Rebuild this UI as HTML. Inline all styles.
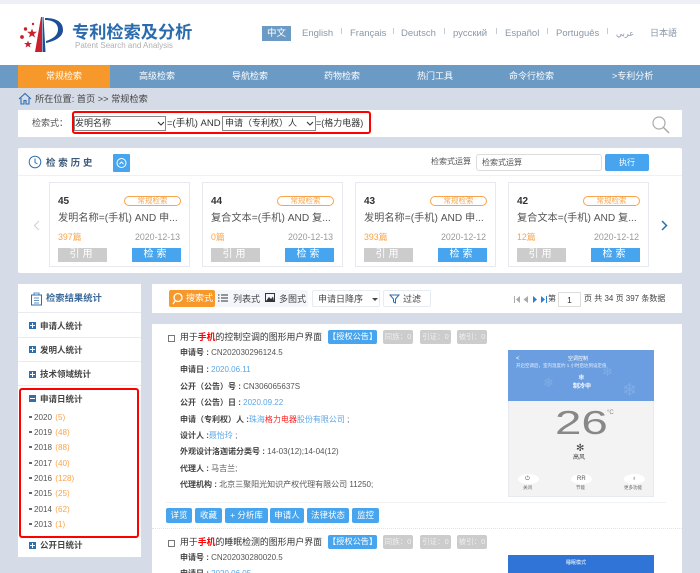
<!DOCTYPE html>
<html><head><meta charset="utf-8">
<style>
*{box-sizing:border-box;margin:0;padding:0}
html{width:700px;height:573px;overflow:hidden;background:#d5dbe7}
body{width:700px;height:573px;overflow:hidden;font-family:"Liberation Sans","Noto Sans CJK SC",sans-serif;position:relative;color:#444;background:#d5dbe7;filter:blur(.3px)}
.a{position:absolute;white-space:nowrap;line-height:1}
.w{position:absolute;background:#fff}
.card{position:absolute;top:182px;width:141px;height:85px;background:#fff;border:1px solid #e6e9ef}
.n{left:8px;top:14px;font-size:10px;font-weight:bold;color:#333}
.tag{left:74px;top:13px;width:57px;height:10px;border:1px solid #f9a44a;border-radius:5px;color:#f9a44a;font-size:7.5px;line-height:8px;text-align:center}
.t{left:8px;top:31px;font-size:10.2px;color:#555}
.c{left:8px;top:50px;font-size:8.8px;color:#f9a44a}
.d{right:9px;top:50px;font-size:8.8px;color:#999}
.b1{left:8px;top:65px;width:49px;height:14px;background:#ccc;color:#fff;font-size:10px;line-height:14px;text-align:center;letter-spacing:3px}
.b2{left:82px;top:65px;width:49px;height:14px;background:#46a5ee;color:#fff;font-size:10px;line-height:14px;text-align:center;letter-spacing:3px}
.nav{top:72px;font-size:9px;color:#fff}
.lang{top:29px;font-size:9.5px;color:#8a97a8}
.tick{position:absolute;top:28px;width:1px;height:6px;background:#c5cbd3}
.side{left:40px;font-size:8.5px;font-weight:bold;color:#444}
.plus{position:absolute;left:29px;width:7px;height:7px;background:#2f6fae}
.plus:before{content:"";position:absolute;left:1px;top:3px;width:5px;height:1px;background:#fff}
.plus.p:after{content:"";position:absolute;left:3px;top:1px;width:1px;height:5px;background:#fff}
.line{position:absolute;left:18px;width:123px;height:1px;background:#e8ebf0}
.yr{left:29px;font-size:8.1px;color:#555}
.yr s{display:inline-block;width:3px;height:2px;background:#666;margin-right:2px;vertical-align:2px;text-decoration:none}
.yr b{font-weight:normal;color:#f9a44a;margin-left:1px}
.f{left:180px;font-size:8px;color:#555}
.f b{color:#444}
.f i{font-style:normal;color:#5aa6e6}
.f u{text-decoration:none;color:#f22}
.ttl{left:180px;font-size:8.9px;color:#333}
.ttl u{text-decoration:none;color:#f00;font-weight:bold}
.st{height:14px;background:#ccc;border-radius:2px;color:#eee;font-size:7.5px;line-height:14px;text-align:center}
.gr{height:14px;background:#46a5ee;border-radius:2px;color:#fff;font-size:8.2px;line-height:14px;text-align:center}
.ab{position:absolute;top:508px;height:15px;background:#46a5ee;border-radius:2px;color:#fff;font-size:8.5px;line-height:15px;text-align:center}
.cb{position:absolute;left:168px;width:7px;height:7px;border:1px solid #777;background:#fff}
.tb{top:295px;font-size:9px;color:#444}
.ci{position:absolute;top:474px;width:21px;height:10px;border-radius:50%;background:#fff}
.sm{font-size:4.5px;color:#666}
</style></head>
<body>
<div class="a" style="left:0;top:0;width:700px;height:4px;background:#eef0f5"></div>
<div class="w" style="left:0;top:4px;width:700px;height:61px"></div>

<svg class="a" style="left:18px;top:15px" width="46" height="40" viewBox="0 0 46 40">
<path d="M17 37 L23 2 L24 2 L24 37Z" fill="#c8202e"/>
<path d="M24.500 2 L25.500 2 L27.500 37 L24.500 37Z" fill="#1e4f96"/>
<path d="M27 3 C40 3 45 8 45 15 C45 22 37 26 28 28 L28 26 C34 24 40 21 40 14 C40 8 34 5 27 5Z" fill="#1e4f96"/>
<polygon points="14,13.500 15.200,16.700 19,16.800 16,19 17,22.500 14,20.500 11,22.500 12,19 9,16.800 12.800,16.700" fill="#c8202e"/>
<polygon points="10,25.500 11,28 14,28 11.600,29.800 12.500,32.500 10,31 7.500,32.500 8.400,29.800 6,28 9,28" fill="#c8202e"/>
<circle cx="4" cy="22" r="1.900" fill="#c8202e"/><circle cx="7.500" cy="14" r="1.700" fill="#c8202e"/><circle cx="15" cy="9" r="1.200" fill="#c8202e"/>
</svg>
<div class="a" style="left:72px;top:24px;font-size:17.200px;font-weight:bold;color:#2a6bae">专利检索及分析</div>
<div class="a" style="left:75px;top:42px;font-size:8px;color:#b0b0b0">Patent Search and Analysis</div>

<div class="a" style="left:262px;top:26px;width:29px;height:15px;background:#6b9ac4;color:#fff;font-size:9.500px;line-height:15px;text-align:center">中文</div>
<div class="a lang" style="left:302px">English</div>
<div class="a lang" style="left:350px">Français</div>
<div class="a lang" style="left:401px">Deutsch</div>
<div class="a lang" style="left:453px">русский</div>
<div class="a lang" style="left:505px">Español</div>
<div class="a lang" style="left:556px">Português</div>
<div class="a lang" style="left:616px;font-size:8px;top:30px">عربي</div>
<div class="a lang" style="left:650px;font-size:9px">日本語</div>
<div class="tick" style="left:341px"></div><div class="tick" style="left:393px"></div><div class="tick" style="left:444px"></div><div class="tick" style="left:496px"></div><div class="tick" style="left:547px"></div><div class="tick" style="left:607px"></div>

<div class="a" style="left:0;top:65px;width:700px;height:23px;background:#6b9ac4"></div>
<div class="a" style="left:18px;top:65px;width:92px;height:23px;background:#f7982a"></div>
<div class="a nav" style="left:46px">常规检索</div>
<div class="a nav" style="left:139px">高级检索</div>
<div class="a nav" style="left:232px">导航检索</div>
<div class="a nav" style="left:324px">药物检索</div>
<div class="a nav" style="left:417px">热门工具</div>
<div class="a nav" style="left:509px">命令行检索</div>
<div class="a nav" style="left:612px">&gt;专利分析</div>

<svg class="a" style="left:18px;top:92px" width="14" height="13" viewBox="0 0 14 13"><path d="M1 7 L7 1.500 L13 7 M3 6 V12 H6 V8.500 H8 V12 H11 V6" fill="none" stroke="#2f6fae" stroke-width="1.100"/></svg>
<div class="a" style="left:35px;top:95px;font-size:9.200px;color:#444">所在位置: 首页 &gt;&gt; 常规检索</div>

<div class="w" style="left:18px;top:110px;width:664px;height:27px"></div>
<div class="a" style="left:32px;top:119px;font-size:9px;color:#555">检索式：</div>
<div class="a" style="left:72px;top:111px;width:299px;height:23px;border:2px solid #f00;border-radius:3px"></div>
<div class="a" style="left:74px;top:116px;width:92px;height:15px;background:#fff;border:1px solid #888;font-size:9px;line-height:13px;color:#333">发明名称</div>
<svg class="a" style="left:157px;top:121px" width="8" height="5"><path d="M1 1 L4 4 L7 1" fill="none" stroke="#333" stroke-width="1.100"/></svg>
<div class="a" style="left:167px;top:119px;font-size:9.500px;color:#333">=(手机) AND</div>
<div class="a" style="left:222px;top:116px;width:94px;height:15px;background:#fff;border:1px solid #888;font-size:9px;line-height:13px;padding-left:2px;color:#333">申请（专利权）人</div>
<svg class="a" style="left:306px;top:121px" width="8" height="5"><path d="M1 1 L4 4 L7 1" fill="none" stroke="#333" stroke-width="1.100"/></svg>
<div class="a" style="left:316px;top:119px;font-size:9px;color:#333">=(格力电器)</div>
<svg class="a" style="left:651px;top:116px" width="20" height="19"><circle cx="8" cy="7" r="6" fill="none" stroke="#aaa" stroke-width="1.200"/><path d="M12.500 11.500 L18 17" stroke="#aaa" stroke-width="1.500"/></svg>

<div class="w" style="left:18px;top:148px;width:664px;height:125px;border-radius:2px"></div>
<div class="a" style="left:18px;top:175px;width:664px;height:1px;background:#eef0f4"></div>
<svg class="a" style="left:28px;top:155px" width="14" height="14"><circle cx="7" cy="7" r="5.800" fill="none" stroke="#2f6fae" stroke-width="1"/><path d="M7 3.500 V7.500 L9.500 9" fill="none" stroke="#2f6fae"/></svg>
<div class="a" style="left:46px;top:159px;font-size:9.500px;font-weight:bold;color:#3c5a7a;letter-spacing:2.800px">检索历史</div>
<div class="a" style="left:113px;top:154px;width:17px;height:18px;background:#46a5ee;border-radius:1px"></div>
<svg class="a" style="left:115px;top:157px" width="13" height="12"><circle cx="6.500" cy="6" r="4.500" fill="none" stroke="#fff"/><path d="M4.500 7 L6.500 5 L8.500 7" fill="none" stroke="#fff"/></svg>
<div class="a" style="left:431px;top:158px;font-size:8px;color:#555">检索式运算</div>
<div class="a" style="left:476px;top:154px;width:126px;height:17px;border:1px solid #ddd;border-radius:3px;background:#fff;font-size:8px;line-height:15px;padding-left:5px;color:#555">检索式运算</div>
<div class="a" style="left:605px;top:154px;width:44px;height:17px;background:#46a5ee;border-radius:2px;color:#fff;font-size:8px;line-height:17px;text-align:center">执行</div>
<svg class="a" style="left:33px;top:220px" width="7" height="11"><path d="M6 1 L1.500 5.500 L6 10" fill="none" stroke="#ccd4e0" stroke-width="1.200"/></svg>
<svg class="a" style="left:661px;top:220px" width="7" height="11"><path d="M1 1 L5.500 5.500 L1 10" fill="none" stroke="#2f6fae" stroke-width="1.500"/></svg>

<div class="card" style="left:49px"><div class="a n">45</div><div class="a tag">常规检索</div><div class="a t">发明名称=(手机) AND 申...</div><div class="a c">397篇</div><div class="a d">2020-12-13</div><div class="a b1">引用</div><div class="a b2">检索</div></div>
<div class="card" style="left:202px"><div class="a n">44</div><div class="a tag">常规检索</div><div class="a t">复合文本=(手机) AND 复...</div><div class="a c">0篇</div><div class="a d">2020-12-13</div><div class="a b1">引用</div><div class="a b2">检索</div></div>
<div class="card" style="left:355px"><div class="a n">43</div><div class="a tag">常规检索</div><div class="a t">发明名称=(手机) AND 申...</div><div class="a c">393篇</div><div class="a d">2020-12-12</div><div class="a b1">引用</div><div class="a b2">检索</div></div>
<div class="card" style="left:508px"><div class="a n">42</div><div class="a tag">常规检索</div><div class="a t">复合文本=(手机) AND 复...</div><div class="a c">12篇</div><div class="a d">2020-12-12</div><div class="a b1">引用</div><div class="a b2">检索</div></div>

<div class="w" style="left:18px;top:284px;width:123px;height:273px"></div>
<svg class="a" style="left:30px;top:292px" width="13" height="14"><rect x="1.500" y="3" width="10" height="10" fill="none" stroke="#2f6fae"/><path d="M4 3 V1 H9 V3 M4 6 H9 M4 8.500 H9 M4 11 H9" fill="none" stroke="#2f6fae" stroke-width=".8"/></svg>
<div class="a" style="left:46px;top:294px;font-size:9.300px;font-weight:bold;color:#3c6a9a">检索结果统计</div>
<div class="line" style="top:312px"></div><div class="line" style="top:337px"></div><div class="line" style="top:361px"></div><div class="line" style="top:385px"></div>
<div class="plus p" style="top:322px"></div><div class="a side" style="top:322px">申请人统计</div>
<div class="plus p" style="top:346px"></div><div class="a side" style="top:346px">发明人统计</div>
<div class="plus p" style="top:371px"></div><div class="a side" style="top:370px">技术领域统计</div>
<div class="plus" style="top:395px"></div><div class="a side" style="top:395px">申请日统计</div>
<div class="a yr" style="top:413.500px"><s></s>2020 <b>(5)</b></div>
<div class="a yr" style="top:429px"><s></s>2019 <b>(48)</b></div>
<div class="a yr" style="top:444px"><s></s>2018 <b>(88)</b></div>
<div class="a yr" style="top:459.500px"><s></s>2017 <b>(40)</b></div>
<div class="a yr" style="top:475px"><s></s>2016 <b>(128)</b></div>
<div class="a yr" style="top:490px"><s></s>2015 <b>(25)</b></div>
<div class="a yr" style="top:505.500px"><s></s>2014 <b>(62)</b></div>
<div class="a yr" style="top:521px"><s></s>2013 <b>(1)</b></div>
<div class="a" style="left:19px;top:388px;width:120px;height:150px;border:2px solid #f00;border-radius:3px"></div>
<div class="plus p" style="top:542px"></div><div class="a side" style="top:541px">公开日统计</div>

<div class="w" style="left:152px;top:284px;width:530px;height:29px"></div>
<div class="a" style="left:215px;top:290px;width:93px;height:17px;background:#f3f6fb;border-radius:2px"></div>
<div class="a" style="left:169px;top:290px;width:46px;height:17px;background:#f7982a;border-radius:2px;color:#fff;font-size:9px;line-height:17px;padding-left:17px">搜索式</div>
<svg class="a" style="left:171px;top:292px" width="13" height="13"><circle cx="7" cy="5.500" r="4" fill="none" stroke="#fff" stroke-width="1.300"/><path d="M4 9 L2 12" stroke="#fff" stroke-width="1.300"/></svg>
<svg class="a" style="left:218px;top:294px" width="11" height="9"><path d="M0 1 H1.500 M3 1 H10 M0 4 H1.500 M3 4 H10 M0 7 H1.500 M3 7 H10" stroke="#333" stroke-width="1"/></svg>
<div class="a tb" style="left:233px">列表式</div>
<svg class="a" style="left:265px;top:293px" width="11" height="10"><rect x=".5" y=".5" width="9" height="8" fill="none" stroke="#333"/><path d="M1 8 L4 4 L6 6 L8 3.500 L9 8Z" fill="#333"/></svg>
<div class="a tb" style="left:279px">多图式</div>
<div class="a" style="left:312px;top:290px;width:68px;height:17px;background:#fff;border:1px solid #e6ecf4;border-radius:2px"></div>
<div class="a tb" style="left:318px">申请日降序</div>
<div class="a" style="left:372px;top:298px;width:0;height:0;border:3px solid transparent;border-top-color:#444"></div>
<div class="a" style="left:383px;top:290px;width:48px;height:17px;background:#fff;border:1px solid #e6ecf4;border-radius:2px"></div>
<div class="a tb" style="left:403px">过滤</div>
<svg class="a" style="left:389px;top:294px" width="11" height="10"><path d="M1 1 H10 L6.500 5 V9 L4.500 8 V5Z" fill="none" stroke="#2f6fae"/></svg>

<svg class="a" style="left:513px;top:295px" width="35" height="9"><path d="M1.500 1 V8" stroke="#aaa"/><path d="M7 1 L3 4.500 L7 8Z M15 1 L10.500 4.500 L15 8Z" fill="#aaa"/><path d="M20 1 L24 4.500 L20 8Z M28 1 L32 4.500 L28 8Z" fill="#2f7fd0"/><path d="M33.500 1 V8" stroke="#2f7fd0"/></svg>
<div class="a" style="left:548px;top:295px;font-size:8px;color:#444">第</div>
<div class="a" style="left:558px;top:292px;width:23px;height:15px;border:1px solid #ddd;background:#fff;font-size:8.500px;line-height:15px;text-align:center;color:#333">1</div>
<div class="a" style="left:584px;top:295px;font-size:8px;color:#444">页 共 34 页 397 条数据</div>

<div class="w" style="left:152px;top:324px;width:530px;height:249px"></div>
<div class="cb" style="top:335px"></div>
<div class="a ttl" style="top:333px">用于<u>手机</u>的控制空调的图形用户界面</div>
<div class="a gr" style="left:328px;top:330px;width:49px">【授权公告】</div>
<div class="a st" style="left:383px;top:330px;width:30px">同族：0</div>
<div class="a st" style="left:420px;top:330px;width:31px">引证：0</div>
<div class="a st" style="left:457px;top:330px;width:30px">被引：0</div>
<div class="a f" style="top:349px"><b>申请号 :</b> CN202030296124.5</div>
<div class="a f" style="top:366px"><b>申请日 :</b> <i>2020.06.11</i></div>
<div class="a f" style="top:383px"><b>公开（公告）号 :</b> CN306065637S</div>
<div class="a f" style="top:399px"><b>公开（公告）日 :</b> <i>2020.09.22</i></div>
<div class="a f" style="top:416px"><b>申请（专利权）人 :</b><i>珠海<u>格力电器</u>股份有限公司</i> ;</div>
<div class="a f" style="top:432px"><b>设计人 :</b><i>聂怡玲</i> ;</div>
<div class="a f" style="top:448px"><b>外观设计洛迦诺分类号 :</b> 14-03(12);14-04(12)</div>
<div class="a f" style="top:465px"><b>代理人 :</b> 马吉兰;</div>
<div class="a f" style="top:481px"><b>代理机构 :</b> 北京三聚阳光知识产权代理有限公司 11250;</div>
<div class="a" style="left:166px;top:502px;width:500px;height:1px;background:#f0f2f5"></div>
<div class="ab" style="left:166px;width:26px">详览</div>
<div class="ab" style="left:195px;width:27px">收藏</div>
<div class="ab" style="left:225px;width:43px">+ 分析库</div>
<div class="ab" style="left:270px;width:34px">申请人</div>
<div class="ab" style="left:307px;width:42px">法律状态</div>
<div class="ab" style="left:352px;width:27px">监控</div>
<div class="a" style="left:152px;top:528px;width:530px;border-top:1px dotted #dfe3ea"></div>
<div class="cb" style="top:540px"></div>
<div class="a ttl" style="top:538px">用于<u>手机</u>的睡眠检测的图形用户界面</div>
<div class="a gr" style="left:328px;top:535px;width:49px">【授权公告】</div>
<div class="a st" style="left:383px;top:535px;width:30px">同族：0</div>
<div class="a st" style="left:420px;top:535px;width:31px">引证：0</div>
<div class="a st" style="left:457px;top:535px;width:30px">被引：0</div>
<div class="a f" style="top:554px"><b>申请号 :</b> CN202030280020.5</div>
<div class="a f" style="top:570px"><b>申请日 :</b> <i>2020.06.05</i></div>

<div class="a" style="left:508px;top:350px;width:146px;height:147px;background:#f3f3f4;border:1px solid #e6e9ef"></div>
<div class="a" style="left:508px;top:350px;width:146px;height:51px;background:#6a9ee0"></div>
<div class="a" style="left:516px;top:356px;font-size:6px;color:#fff">&lt;</div>
<div class="a" style="left:568px;top:357px;font-size:5px;color:#fff">空调控制</div>
<div class="a" style="left:516px;top:364px;font-size:4.500px;color:#e8f0fb">开启空调后，室内温度约 1 小时后达到设定值</div>
<div class="a" style="left:578px;top:374px;font-size:8px;color:#fff">❄</div>
<div class="a" style="left:573px;top:384px;font-size:6px;color:#fff;font-weight:bold">制冷中</div>
<div class="a" style="left:543px;top:376px;font-size:13px;color:#80ace6">❄</div>
<div class="a" style="left:602px;top:365px;font-size:13px;color:#80ace6">❄</div>
<div class="a" style="left:622px;top:381px;font-size:18px;color:#80ace6">❄</div>
<div class="a" style="left:555px;top:406px;font-size:33px;color:#888;transform:scaleX(1.44);transform-origin:left top">26</div>
<div class="a" style="left:607px;top:410px;font-size:6px;color:#888">°C</div>
<div class="a" style="left:576px;top:444px;font-size:10px;color:#444">✻</div>
<div class="a" style="left:573px;top:455px;font-size:6px;color:#444">高风</div>
<div class="ci" style="left:518px"></div><div class="ci" style="left:571px"></div><div class="ci" style="left:624px"></div>
<div class="a" style="left:525px;top:476px;font-size:6px;color:#555">⏻</div>
<div class="a" style="left:577px;top:476px;font-size:6px;color:#555">RR</div>
<div class="a" style="left:632px;top:476px;font-size:6px;color:#555">♁</div>
<div class="a sm" style="left:523px;top:486px">关闭</div>
<div class="a sm" style="left:576px;top:486px">节能</div>
<div class="a sm" style="left:624px;top:486px">更多功能</div>
<div class="a" style="left:508px;top:555px;width:146px;height:18px;background:#2f74d6"></div>
<div class="a" style="left:566px;top:561px;font-size:5px;color:#fff">睡眠模式</div>
</body></html>
